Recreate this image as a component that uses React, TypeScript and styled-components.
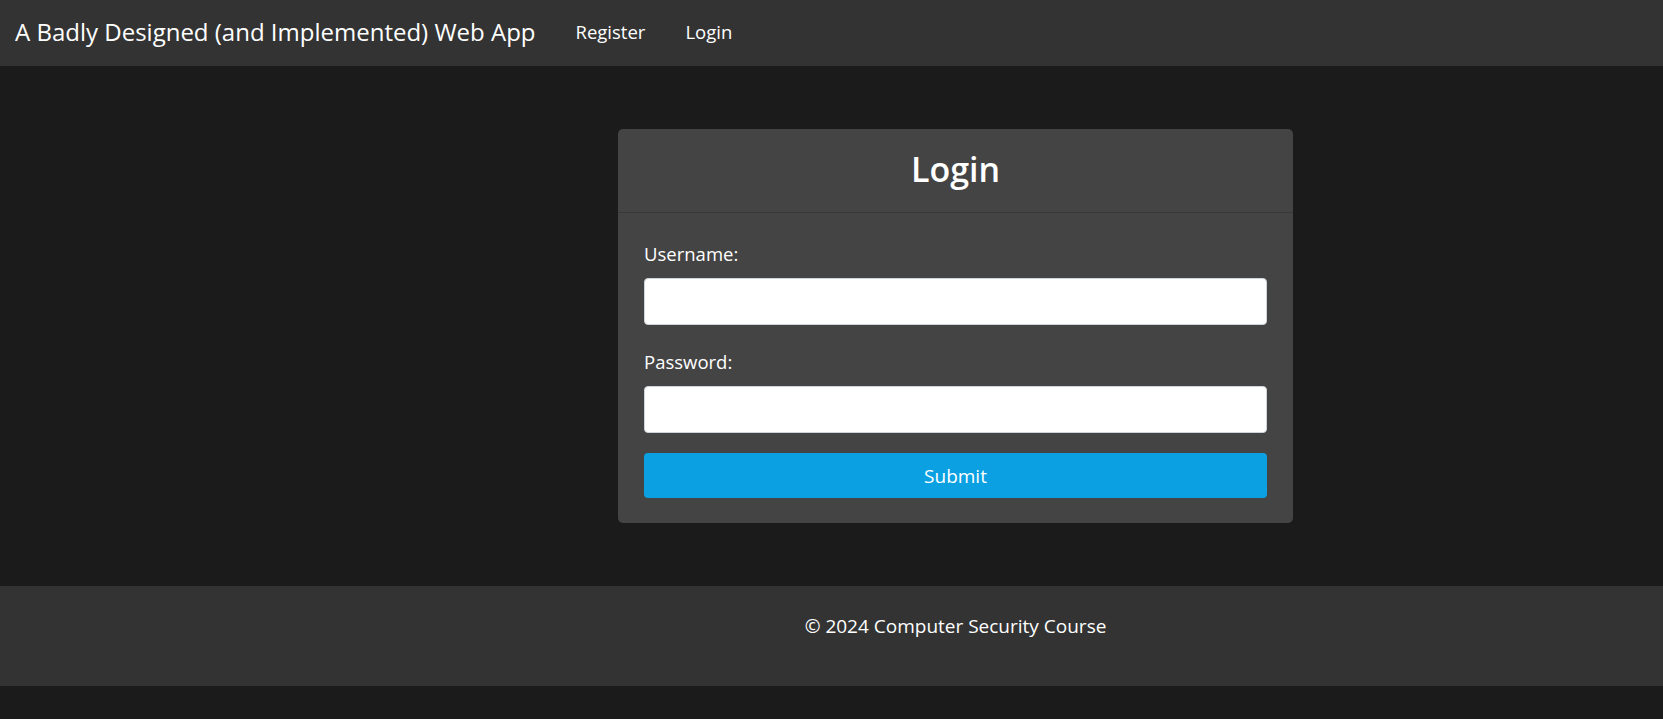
import React from "react";
import styled, { createGlobalStyle } from "styled-components";

const GlobalStyle = createGlobalStyle`
  html, body {
    margin: 0;
    padding: 0;
    background: #1b1b1b;
    font-family: "Open Sans", "Noto Sans", sans-serif;
    color: #ffffff;
  }
  * { box-sizing: border-box; }
`;

const Navbar = styled.nav`
  height: 66px;
  background: #333333;
  display: flex;
  align-items: center;
  padding: 0 15px 4px;
`;

const Brand = styled.a`
  font-size: 24px;
  color: #ffffff;
  text-decoration: none;
  margin-right: 40px;
  white-space: nowrap;
`;

const NavLinks = styled.div`
  display: flex;
  gap: 40px;
`;

const NavLink = styled.a`
  font-size: 18.5px;
  color: #ffffff;
  text-decoration: none;
`;

const Content = styled.div`
  padding-left: 248px;
  display: flex;
  justify-content: center;
`;

const Main = styled(Content)`
  padding-top: 63px;
  padding-bottom: 63px;
`;

const Card = styled.div`
  width: 675px;
  background: #444444;
  border-radius: 5px;
  overflow: hidden;
`;

const CardHeader = styled.div`
  height: 84px;
  border-bottom: 1px solid #383838;
  display: flex;
  align-items: center;
  justify-content: center;
  padding-bottom: 4px;
`;

const Title = styled.h2`
  margin: 0;
  font-size: 34px;
  font-weight: 600;
  color: #ffffff;
`;

const CardBody = styled.form`
  padding: 27px 26px 25px;
`;

const Field = styled.div<{ $last?: boolean }>`
  margin-bottom: ${(p) => (p.$last ? "20px" : "23px")};
`;

const Label = styled.label`
  display: block;
  font-size: 18.5px;
  line-height: 27px;
  margin-bottom: 11px;
  color: #ffffff;
`;

const Input = styled.input`
  display: block;
  width: 100%;
  height: 47px;
  background: #ffffff;
  border: 1px solid #ced4da;
  border-radius: 4px;
  padding: 6px 12px;
  font-size: 16px;
  outline: none;
`;

const Button = styled.button`
  display: block;
  width: 100%;
  height: 45px;
  background: #0aa0e2;
  border: none;
  border-radius: 4px;
  color: #ffffff;
  font-family: inherit;
  font-size: 19px;
`;

const Footer = styled(Content)`
  height: 100px;
  background: #333333;
  padding-top: 27px;
`;

const FooterText = styled.p`
  margin: 0;
  font-size: 19px;
  line-height: 27px;
  color: #ffffff;
`;

export default function App() {
  return (
    <>
      <GlobalStyle />
      <Navbar>
        <Brand href="#">A Badly Designed (and Implemented) Web App</Brand>
        <NavLinks>
          <NavLink href="#">Register</NavLink>
          <NavLink href="#">Login</NavLink>
        </NavLinks>
      </Navbar>
      <Main>
        <Card>
          <CardHeader>
            <Title>Login</Title>
          </CardHeader>
          <CardBody onSubmit={(e) => e.preventDefault()}>
            <Field>
              <Label htmlFor="username">Username:</Label>
              <Input id="username" type="text" />
            </Field>
            <Field $last>
              <Label htmlFor="password">Password:</Label>
              <Input id="password" type="password" />
            </Field>
            <Button type="submit">Submit</Button>
          </CardBody>
        </Card>
      </Main>
      <Footer>
        <FooterText>© 2024 Computer Security Course</FooterText>
      </Footer>
    </>
  );
}
